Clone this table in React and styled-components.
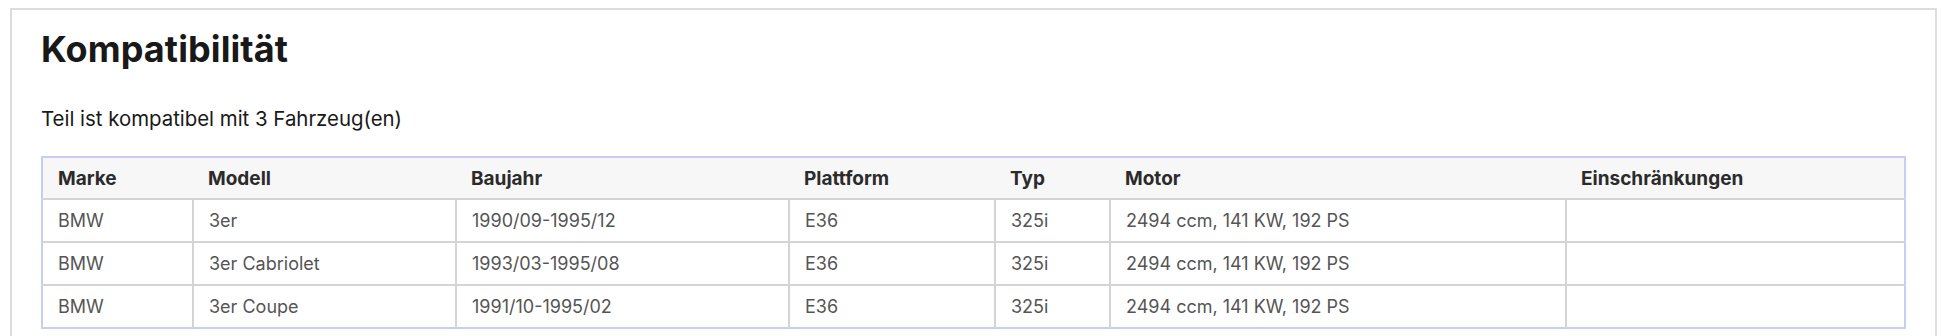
import React from 'react'
import styled, { createGlobalStyle } from 'styled-components'

const GlobalStyle = createGlobalStyle`
  body {
    margin: 0;
    background: #fff;
    font-family: Inter, "Noto Sans", "Liberation Sans", sans-serif;
  }
`

const Panel = styled.section`
  margin: 8px 9px 0 10px;
  border: 2px solid #dcdcdc;
  border-bottom: none;
  padding: 19px 31px 40px 29px;
`

const Title = styled.h2`
  margin: 0;
  font-size: 36px;
  line-height: 40px;
  font-weight: 700;
  color: #191919;
  letter-spacing: 0.1px;
`

const Summary = styled.p`
  margin: 36px 0 23px;
  font-size: 20.4px;
  line-height: 28px;
  color: #191919;
`

const Table = styled.table`
  width: 100%;
  table-layout: fixed;
  border-collapse: collapse;
  border: 2px solid #c8cdf6;
`

const HeadCell = styled.th`
  box-sizing: border-box;
  width: ${p => p.$w}px;
  height: 42px;
  padding: 0 15px;
  background: #f7f7f7;
  border-bottom: 2px solid #d4d4d4;
  text-align: left;
  font-size: 19px;
  font-weight: 700;
  color: #2b2b2b;
`

const Cell = styled.td`
  height: 41px;
  padding: 0 15px;
  border: 2px solid #d4d4d4;
  font-size: 18px;
  color: #555;
  white-space: nowrap;
  &:first-child { border-left: none; }
  &:last-child { border-right: none; }
`

const Row = styled.tr`
  &:last-child td { border-bottom: none; }
`

const columns = [
  ['Marke', 151],
  ['Modell', 263],
  ['Baujahr', 333],
  ['Plattform', 206],
  ['Typ', 115],
  ['Motor', 456],
  ['Einschränkungen', 339],
]

const vehicles = [
  ['BMW', '3er', '1990/09-1995/12', 'E36', '325i', '2494 ccm, 141 KW, 192 PS', ''],
  ['BMW', '3er Cabriolet', '1993/03-1995/08', 'E36', '325i', '2494 ccm, 141 KW, 192 PS', ''],
  ['BMW', '3er Coupe', '1991/10-1995/02', 'E36', '325i', '2494 ccm, 141 KW, 192 PS', ''],
]

export default function App() {
  return (
    <>
      <GlobalStyle />
      <Panel>
        <Title>Kompatibilität</Title>
        <Summary>Teil ist kompatibel mit {vehicles.length} Fahrzeug(en)</Summary>
        <Table>
          <thead>
            <tr>
              {columns.map(([label, w]) => (
                <HeadCell key={label} $w={w}>{label}</HeadCell>
              ))}
            </tr>
          </thead>
          <tbody>
            {vehicles.map((v, i) => (
              <Row key={i}>
                {v.map((c, j) => <Cell key={j}>{c}</Cell>)}
              </Row>
            ))}
          </tbody>
        </Table>
      </Panel>
    </>
  )
}
